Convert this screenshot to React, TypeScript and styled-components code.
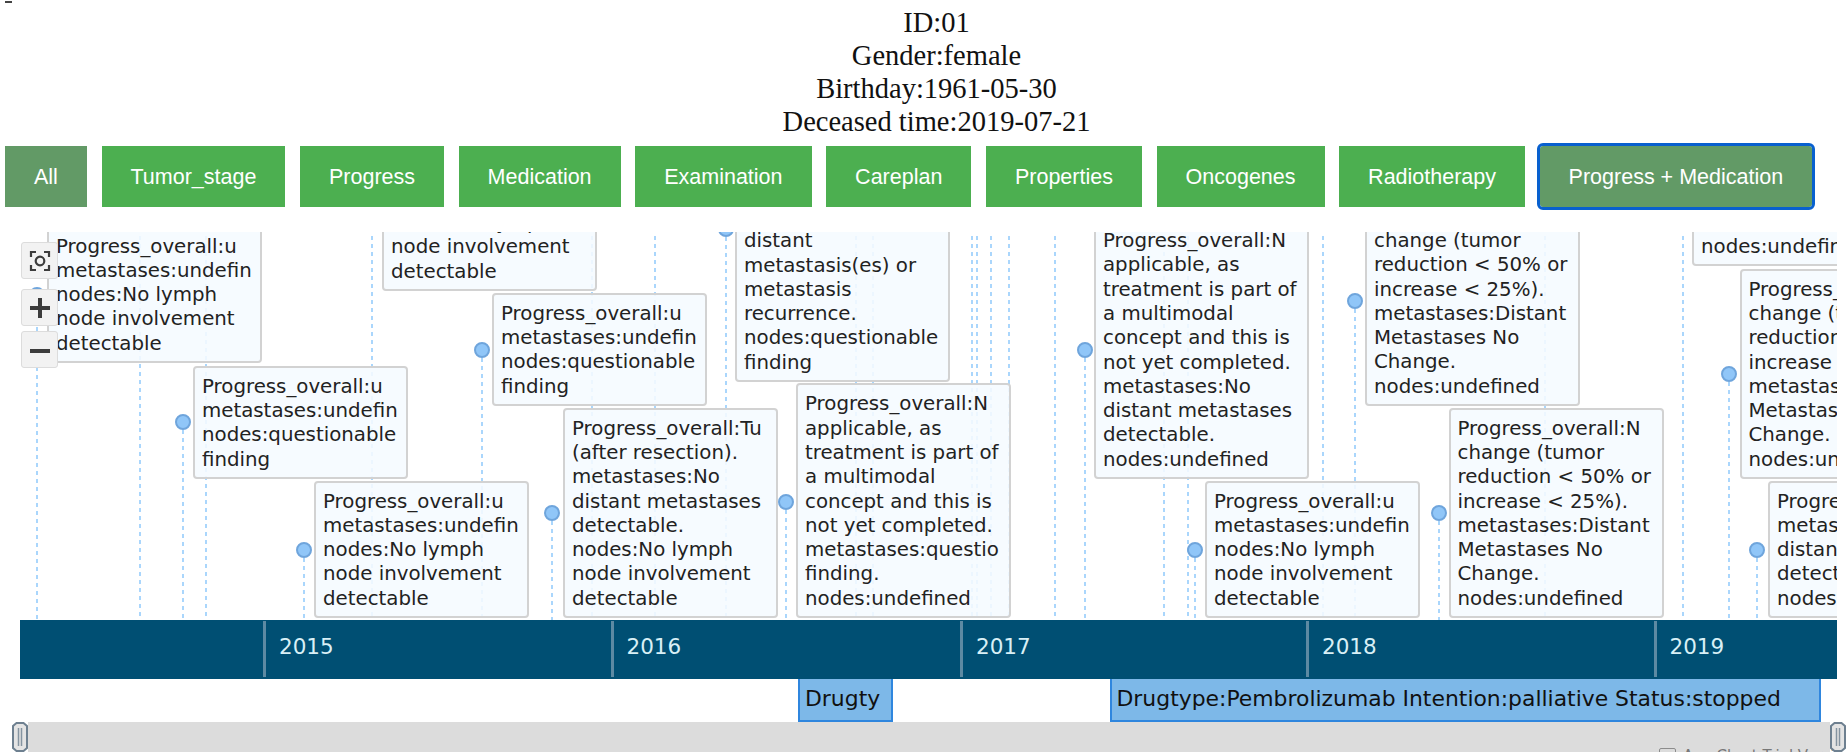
import React from 'react';
import styled, { createGlobalStyle } from 'styled-components';

const PANE_HEIGHT = 388;

const GlobalStyle = createGlobalStyle`
  html, body {
    margin: 0;
    padding: 0;
    height: 752px;
    overflow: hidden;
    background: #fff;
  }
`;

const Page = styled.div`
  position: relative;
  display: flex;
  flex-direction: column;
  width: 1848px;
  height: 752px;
  overflow: hidden;
`;

const TopMark = styled.div`
  position: absolute;
  left: 5px;
  top: 1px;
  width: 7px;
  height: 2px;
  background: #444;
`;

const Patient = styled.div`
  padding: 6px 0 0 25px;
  text-align: center;
  font-family: 'Liberation Serif', serif;
  font-size: 28.5px;
  line-height: 33px;
  color: #111;
`;

const Toolbar = styled.div`
  display: flex;
  gap: 14.6px;
  margin: 8px 0 25px 5px;
`;

const FilterButton = styled.button<{ $muted?: boolean; $focused?: boolean }>`
  height: 61px;
  padding: 1px 29px 0;
  border: none;
  border-radius: ${(p) => (p.$focused ? '3px' : '0')};
  background: ${(p) => (p.$muted ? '#629a66' : '#4caf50')};
  color: #fff;
  font-family: 'Liberation Sans', Arial, sans-serif;
  font-size: 21.5px;
  outline: ${(p) => (p.$focused ? '3px solid #0860cf' : 'none')};
`;

const Timeline = styled.div`
  display: flex;
  flex-direction: column;
  flex: 1;
  padding: 0 11px 0 20px;
`;

const ItemsPane = styled.div`
  position: relative;
  height: ${PANE_HEIGHT}px;
  overflow: hidden;
  font-family: 'DejaVu Sans', Verdana, sans-serif;
  font-size: 19.8px;
  line-height: 24.3px;
  color: #222;
`;

const Stem = styled.div<{ $x: number; $y: number }>`
  position: absolute;
  left: ${(p) => p.$x - 1}px;
  top: ${(p) => p.$y}px;
  bottom: 0;
  width: 2px;
  background: repeating-linear-gradient(#aad6fc 0 4px, transparent 4px 8px);
`;

const Dot = styled.div<{ $x: number; $y: number }>`
  position: absolute;
  left: ${(p) => p.$x - 8}px;
  top: ${(p) => p.$y - 8}px;
  width: 16px;
  height: 16px;
  box-sizing: border-box;
  border: 2px solid #6fa5dc;
  border-radius: 50%;
  background: #90c6f8;
`;

const Item = styled.div<{ $x: number; $bottom: number }>`
  position: absolute;
  left: ${(p) => p.$x}px;
  bottom: ${(p) => p.$bottom}px;
  width: 215px;
  box-sizing: border-box;
  padding: 7px 7px 5px;
  border: 2px solid #d2d2d2;
  border-radius: 4px;
  background: rgba(245, 250, 255, 0.88);
`;

const ItemText = styled.div`
  overflow: hidden;
`;

const ZoomControls = styled.div`
  position: absolute;
  left: 1px;
  top: 10px;
  display: flex;
  flex-direction: column;
  gap: 5px;
`;

const ZoomButton = styled.div<{ $gapAfter?: boolean }>`
  display: flex;
  align-items: center;
  justify-content: center;
  width: 37px;
  height: 37px;
  margin-bottom: ${(p) => (p.$gapAfter ? '5px' : '0')};
  box-sizing: border-box;
  border: 1px solid #dcdcdc;
  border-radius: 3px;
  background: #f2f2f2;
`;

const Axis = styled.div`
  position: relative;
  height: 59px;
  background: #004f73;
`;

const YearTick = styled.div<{ $x: number }>`
  position: absolute;
  left: ${(p) => p.$x}px;
  top: 1px;
  height: 56px;
  padding-left: 13px;
  border-left: 3px solid #5d8aa3;
  font-family: 'DejaVu Sans', Verdana, sans-serif;
  font-size: 21.5px;
  line-height: 52px;
  color: #d9f0f6;
`;

const RangePane = styled.div`
  position: relative;
  height: 43px;
`;

const RangeItem = styled.div<{ $x: number; $width: number }>`
  position: absolute;
  left: ${(p) => p.$x}px;
  top: 0;
  width: ${(p) => p.$width}px;
  height: 43px;
  box-sizing: border-box;
  padding-left: 5px;
  overflow: hidden;
  border: 2px solid #2f86de;
  border-top: none;
  background: #7db8e8;
  font-family: 'DejaVu Sans', Verdana, sans-serif;
  font-size: 21.9px;
  line-height: 39px;
  color: #111;
  white-space: nowrap;
`;

const Slider = styled.div`
  position: relative;
  height: 30px;
  margin: 0 7px 0 8px;
  background: #dcdcdc;
`;

const Handle = styled.svg<{ $side: 'left' | 'right' }>`
  position: absolute;
  top: 0;
  ${(p) => p.$side}: -16px;
  width: 16px;
  height: 30px;
`;

const TrialBox = styled.div`
  position: absolute;
  left: 1631px;
  top: 26px;
  width: 17px;
  height: 17px;
  box-sizing: border-box;
  border: 1px solid #8c8c8c;
  border-radius: 2px;
`;

const TrialText = styled.div`
  position: absolute;
  left: 1655px;
  top: 25px;
  font-family: 'DejaVu Sans', Verdana, sans-serif;
  font-size: 15px;
  line-height: 18px;
  color: #777;
  white-space: nowrap;
`;

const UNKNOWN_NODE =
  'Progress_overall:u metastases:undefin nodes:No lymph node involvement detectable';
const UNKNOWN_QUESTION =
  'Progress_overall:u metastases:undefin nodes:questionable finding';
const NO_CHANGE =
  'Progress_overall:N change (tumor reduction < 50% or increase < 25%). metastases:Distant Metastases No Change. nodes:undefined';

const buttons = [
  'All',
  'Tumor_stage',
  'Progress',
  'Medication',
  'Examination',
  'Careplan',
  'Properties',
  'Oncogenes',
  'Radiotherapy',
  'Progress + Medication',
];

// x, y of each event inside the pane; y < 0 means the dot is above the visible part
const markers: { x: number; y: number }[] = [
  { x: 16.5, y: 63 },
  { x: 120, y: -20 },
  { x: 162.5, y: 190 },
  { x: 186, y: -20 },
  { x: 283.5, y: 317.6 },
  { x: 352.4, y: -20 },
  { x: 462, y: 117.7 },
  { x: 532, y: 281 },
  { x: 571.6, y: -20 },
  { x: 634.7, y: -20 },
  { x: 706, y: -3 },
  { x: 765.5, y: 269.7 },
  { x: 836, y: -20 },
  { x: 853, y: -20 },
  { x: 952.3, y: -20 },
  { x: 957, y: -20 },
  { x: 971, y: -20 },
  { x: 989.4, y: -20 },
  { x: 1035, y: -20 },
  { x: 1065, y: 117.7 },
  { x: 1144.4, y: -20 },
  { x: 1168, y: -20 },
  { x: 1175, y: 317.6 },
  { x: 1303, y: -20 },
  { x: 1335, y: 69 },
  { x: 1418.5, y: 281 },
  { x: 1524.5, y: -20 },
  { x: 1663, y: -20 },
  { x: 1709, y: 141.5 },
  { x: 1737, y: 317.6 },
];

const items: { x: number; bottom: number; text: string }[] = [
  { x: 27, bottom: 257, text: UNKNOWN_NODE },
  { x: 362, bottom: 329, text: UNKNOWN_NODE },
  { x: 472, bottom: 214, text: UNKNOWN_QUESTION },
  {
    x: 715,
    bottom: 238,
    text: 'Progress_overall:u metastases:New distant metastasis(es) or metastasis recurrence. nodes:questionable finding',
  },
  { x: 173, bottom: 141, text: UNKNOWN_QUESTION },
  { x: 294, bottom: 2, text: UNKNOWN_NODE },
  {
    x: 543,
    bottom: 2,
    text: 'Progress_overall:Tu (after resection). metastases:No distant metastases detectable. nodes:No lymph node involvement detectable',
  },
  {
    x: 776,
    bottom: 2,
    text: 'Progress_overall:N applicable, as treatment is part of a multimodal concept and this is not yet completed. metastases:questio finding. nodes:undefined',
  },
  {
    x: 1074,
    bottom: 141,
    text: 'Progress_overall:N applicable, as treatment is part of a multimodal concept and this is not yet completed. metastases:No distant metastases detectable. nodes:undefined',
  },
  { x: 1345, bottom: 214, text: NO_CHANGE },
  { x: 1185, bottom: 2, text: UNKNOWN_NODE },
  { x: 1428.5, bottom: 2, text: NO_CHANGE },
  { x: 1672, bottom: 354, text: NO_CHANGE },
  { x: 1719.5, bottom: 141, text: NO_CHANGE },
  {
    x: 1748,
    bottom: 2,
    text: 'Progress_overall:u metastases:No distant metastases detectable. nodes:undefined',
  },
];

const years = [
  { x: 243, label: '2015' },
  { x: 590.5, label: '2016' },
  { x: 940, label: '2017' },
  { x: 1286, label: '2018' },
  { x: 1633.5, label: '2019' },
];

const ranges = [
  { x: 778, width: 95, label: 'Drugty' },
  {
    x: 1089.5,
    width: 711,
    label: 'Drugtype:Pembrolizumab Intention:palliative Status:stopped',
  },
];

const FitIcon = () => (
  <svg width="22" height="22" viewBox="0 0 22 22" fill="none" stroke="#3c3c3c" strokeWidth="2.2">
    <path d="M2 7V2h5M15 2h5v5M20 15v5h-5M7 20H2v-5" />
    <circle cx="11" cy="11" r="4.3" />
  </svg>
);

const PlusIcon = () => (
  <svg width="22" height="22" viewBox="0 0 22 22" fill="none" stroke="#3c3c3c" strokeWidth="4">
    <path d="M1 11h20M11 1v20" />
  </svg>
);

const MinusIcon = () => (
  <svg width="22" height="22" viewBox="0 0 22 22" fill="none" stroke="#3c3c3c" strokeWidth="4">
    <path d="M1 12h20" />
  </svg>
);

const HandleShape = () => (
  <>
    <path
      d="M4.5 1h7L15 4v22l-3.5 3h-7L1 26V4z"
      fill="#e4e4e4"
      stroke="#6e8090"
      strokeWidth="2"
    />
    <path d="M6.5 6v18M9.5 6v18" stroke="#8594a1" strokeWidth="1.5" />
  </>
);

const App: React.FC = () => {
  return (
    <Page>
      <GlobalStyle />
      <TopMark />
      <Patient>
        <div>ID:01</div>
        <div>Gender:female</div>
        <div>Birthday:1961-05-30</div>
        <div>Deceased time:2019-07-21</div>
      </Patient>
      <Toolbar>
        {buttons.map((label) => (
          <FilterButton
            key={label}
            $muted={label === 'All' || label === 'Progress + Medication'}
            $focused={label === 'Progress + Medication'}
          >
            {label}
          </FilterButton>
        ))}
      </Toolbar>
      <Timeline>
        <ItemsPane>
          {markers.map((m) => (
            <Stem key={m.x} $x={m.x} $y={m.y} />
          ))}
          {markers.map((m) => (
            <Dot key={m.x} $x={m.x} $y={m.y} />
          ))}
          {items.map((item) => (
            <Item key={item.x} $x={item.x} $bottom={item.bottom}>
              <ItemText>{item.text}</ItemText>
            </Item>
          ))}
          <ZoomControls>
            <ZoomButton $gapAfter>
              <FitIcon />
            </ZoomButton>
            <ZoomButton>
              <PlusIcon />
            </ZoomButton>
            <ZoomButton>
              <MinusIcon />
            </ZoomButton>
          </ZoomControls>
        </ItemsPane>
        <Axis>
          {years.map((y) => (
            <YearTick key={y.label} $x={y.x}>
              {y.label}
            </YearTick>
          ))}
        </Axis>
        <RangePane>
          {ranges.map((r) => (
            <RangeItem key={r.x} $x={r.x} $width={r.width}>
              {r.label}
            </RangeItem>
          ))}
        </RangePane>
        <Slider>
          <Handle $side="left" viewBox="0 0 16 30">
            <HandleShape />
          </Handle>
          <TrialBox />
          <TrialText>Any Chart Trial Version</TrialText>
          <Handle $side="right" viewBox="0 0 16 30">
            <HandleShape />
          </Handle>
        </Slider>
      </Timeline>
    </Page>
  );
};

export default App;
